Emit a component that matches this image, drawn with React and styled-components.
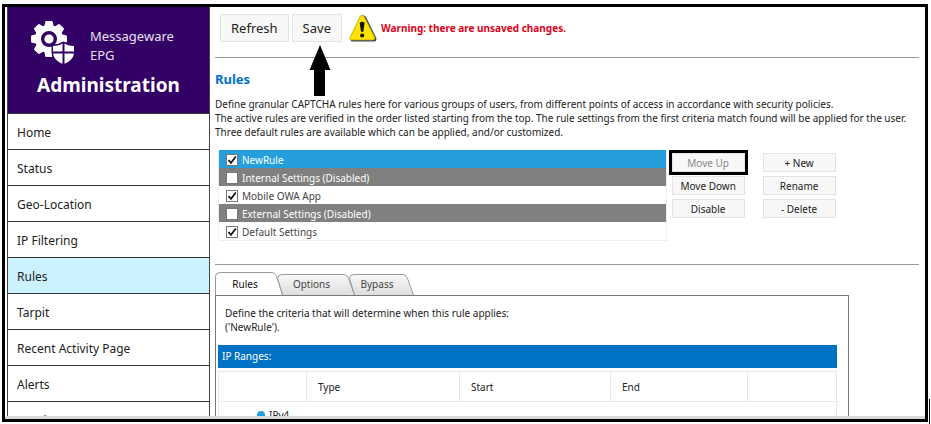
import React, { useState } from 'react';
import styled, { createGlobalStyle } from 'styled-components';

const GlobalStyle = createGlobalStyle`
  * {
    box-sizing: border-box;
  }

  body {
    margin: 0;
    overflow: hidden;
    background: #fff;
    color: #222;
    font-family: 'Noto Sans', 'Open Sans', sans-serif;
    font-size: 10px;
    line-height: 14px;
  }

  button, input {
    font: inherit;
    color: inherit;
    margin: 0;
  }
`;

const Page = styled.div`
  display: flex;
  align-items: flex-end;
  height: 100vh;
  padding: 4px 0 0 2px;
`;

const Frame = styled.div`
  flex: 1;
  min-width: 0;
  height: calc(100vh - 6px);
  margin-bottom: 2px;
  display: flex;
  flex-direction: column;
  border: 3px solid #000;
`;

const Caret = styled.div`
  width: 1px;
  height: 25px;
  margin: 0 1px;
  background: #000;
`;

const Body = styled.div`
  flex: 1;
  min-height: 0;
  display: flex;
  overflow: hidden;
  padding-left: 2px;
  border-bottom: 3px solid #d9d9d9;
`;

const Sidebar = styled.aside`
  flex: none;
  width: 203px;
  border: solid #444;
  border-width: 0 1px;
`;

const Brand = styled.div`
  height: 106px;
  padding-top: 13px;
  background: #330066;
  color: #fff;
`;

const BrandTop = styled.div`
  display: flex;
  gap: 15px;
  padding-left: 22px;
`;

const BrandName = styled.div`
  padding-top: 7px;
  font-size: 13px;
  line-height: 19px;
  color: #e6e0ee;
`;

const BrandTitle = styled.h1`
  margin: 8px 0 0;
  font-size: 19px;
  line-height: 24px;
  text-align: center;
`;

const NavItem = styled.a`
  display: flex;
  align-items: center;
  height: 36px;
  padding: 3px 9px 0;
  border-top: 1px solid #333;
  background: ${(p) => (p.$active ? '#ccf2ff' : '#fff')};
  color: #222;
  font-size: 12px;
  text-decoration: none;
`;

const Main = styled.main`
  flex: 1;
  min-width: 0;
  padding: 7px 6px 0 5px;
`;

const Toolbar = styled.div`
  display: flex;
  align-items: flex-start;
  gap: 3px;
  height: 44px;
  padding-left: 5px;
  border-bottom: 1px solid #999;
`;

const Button = styled.button`
  height: 19px;
  padding: 0;
  border: 1px solid #e3e3e3;
  background: #f8f8f8;
  white-space: nowrap;

  &:disabled {
    color: #888;
  }
`;

const ToolButton = styled(Button)`
  height: 28px;
  padding: 0 10px;
  font-size: 13px;
`;

const SaveSlot = styled.div`
  position: relative;
`;

const Pointer = styled.svg`
  position: absolute;
  top: 31px;
  left: 50%;
  margin-left: -8px;
`;

const Warning = styled.div`
  display: flex;
  align-items: center;
  gap: 4px;
  height: 28px;
  padding-left: 4px;
  color: #e2001a;
  font-size: 10px;
  font-weight: 700;
`;

const Heading = styled.h2`
  margin: 12px 0 9px;
  color: #0072c6;
  font-size: 13px;
  line-height: 18px;
`;

const Text = styled.p`
  margin: 0;
  white-space: nowrap;
`;

const RuleArea = styled.div`
  display: flex;
  padding: 11px 0 23px 3px;
  border-bottom: 1px solid #999;
`;

const RuleList = styled.ul`
  width: 64%;
  height: 91px;
  margin: 0 5px 0 0;
  padding: 0;
  list-style: none;
  border: solid #eee;
  border-width: 0 1px 1px;
`;

const RuleRow = styled.li`
  height: 18px;
  padding-left: 7px;
  background: ${(p) => p.$bg};
  color: ${(p) => p.$color};
`;

const RuleLabel = styled.label`
  display: flex;
  align-items: center;
  gap: 4px;
  height: 18px;
  padding-top: 1px;
`;

const Check = styled.input`
  appearance: none;
  width: 12px;
  height: 12px;
  border: 1px solid #777;
  background: #fff;

  &:checked {
    background: #fff url("data:image/svg+xml,%3Csvg xmlns='http://www.w3.org/2000/svg' viewBox='0 0 10 10'%3E%3Cpath d='M1.5 5 4 7.8 8.8 1.6' fill='none' stroke='%23111' stroke-width='1.7'/%3E%3C/svg%3E");
  }
`;

const Actions = styled.div`
  display: grid;
  grid-template-columns: 73px 73px;
  grid-auto-rows: 19px;
  gap: 4px 18px;
  padding-top: 3px;
`;

const Marked = styled(Button)`
  outline: 3px solid #000;
  z-index: 1;
`;

const Tabs = styled.div`
  display: flex;
  align-items: flex-end;
  margin-top: 7px;
`;

const TabButton = styled.button`
  position: relative;
  z-index: ${(p) => p.$z};
  width: ${(p) => p.$width}px;
  height: 23px;
  margin-right: -7px;
  padding: 0 8px 0 0;
  border: 0;
  background: none;
  color: ${(p) => (p.$active ? '#111' : '#444')};
`;

const TabShape = styled.svg`
  position: absolute;
  inset: 0;
  z-index: -1;
`;

const Panel = styled.section`
  width: 90%;
  height: 200px;
  padding: 10px 11px 0 2px;
  border: 1px solid #777;
`;

const PanelText = styled(Text)`
  padding-left: 7px;
`;

const SectionTitle = styled.h3`
  margin: 11px 0 3px;
  padding-left: 4px;
  background: #0072c6;
  color: #fff;
  font-size: 10px;
  font-weight: 400;
  line-height: 23px;
`;

const Table = styled.table`
  width: 100%;
  table-layout: fixed;
  border-collapse: collapse;

  th, td {
    padding: 0 11px;
    border: 1px solid #e8e8e8;
    font-weight: 400;
    text-align: left;
  }

  th {
    height: 30px;
  }

  td {
    height: 26px;
    padding-left: 38px;
  }
`;

const RadioLabel = styled.label`
  display: flex;
  align-items: center;
  gap: 4px;
`;

const Radio = styled.input`
  appearance: none;
  width: 8px;
  height: 8px;
  border-radius: 50%;
  background: #259fdb;
`;

const navItems = ['Home', 'Status', 'Geo-Location', 'IP Filtering', 'Rules', 'Tarpit', 'Recent Activity Page', 'Alerts', 'Database'];

const initialRules = [
  { name: 'NewRule', enabled: true },
  { name: 'Internal Settings', enabled: false },
  { name: 'Mobile OWA App', enabled: true },
  { name: 'External Settings', enabled: false },
  { name: 'Default Settings', enabled: true },
];

const tabs = [
  { name: 'Rules', width: 68 },
  { name: 'Options', width: 79 },
  { name: 'Bypass', width: 66 },
];

const teeth = [0, 45, 90, 135, 180, 225, 270, 315];

const Logo = () => (
  <svg width="45" height="44" viewBox="0 0 45 44" aria-hidden="true">
    <g fill="#fff">
      <circle cx="19" cy="19" r="14" />
      {teeth.map((a) => (
        <path key={a} d="M14.2 7 15.2 2Q15.4 1 16.4 1H21.6Q22.6 1 22.8 2L23.8 7Z" transform={`rotate(${a} 19 19)`} />
      ))}
    </g>
    <circle cx="19" cy="19" r="6.3" fill="none" stroke="#330066" strokeWidth="3.4" />
    <path
      d="M33.5 23Q38 26 44 26V32C44 38 39.5 42 33.5 44C27.5 42 23 38 23 32V26Q29 26 33.5 23Z"
      fill="#fff"
      stroke="#330066"
      strokeWidth="3"
      strokeLinejoin="round"
      paintOrder="stroke"
    />
    <path d="M33.5 22V44M22 32.5H45" stroke="#330066" strokeWidth="2" />
  </svg>
);

const WarningIcon = () => (
  <svg width="28" height="28" viewBox="0 0 28 28" aria-hidden="true">
    <path d="M14 1.5Q16 1 17 3L27.3 24Q28 27.5 25 27.5H3Q1 27.5 2 25Z" fill="#33425e" />
    <path d="M11.3 2.2Q13 .2 15 2.2L25.8 23.6Q26.5 26 24 26H2.4Q.3 26 1.1 23.6Z" fill="#ffe500" stroke="#b8a100" strokeWidth=".8" />
    <path d="M10.7 8.7Q13.2 6.7 15.6 8.7L14.3 17.7H12Z" fill="#111" />
    <circle cx="13.2" cy="21.5" r="2.1" fill="#111" />
  </svg>
);

const Tab = ({ name, width, active, z, onClick }) => {
  const top = active ? 0.5 : 2.5;
  const left = z === 3 ? 0.5 : 6.5;
  const shoulder = z === 3 ? 0.5 : 1.5;
  const d = `M${left} 23 L${shoulder} ${top + 4} Q${shoulder} ${top} ${shoulder + 4} ${top} H${width - 11} Q${width - 8} ${top} ${width - 6.5} ${top + 4} L${width - 0.5} 23`;

  return (
    <TabButton role="tab" aria-selected={active} $active={active} $z={z} $width={width} onClick={onClick}>
      <TabShape width={width} height="23" aria-hidden="true">
        <defs>
          <linearGradient id={`fill-${name}`} x2="0" y2="1">
            <stop offset="0" stopColor={active ? '#fff' : '#f8f8f8'} />
            <stop offset="1" stopColor={active ? '#fff' : '#dedede'} />
          </linearGradient>
        </defs>
        <path d={d} fill={`url(#fill-${name})`} stroke="#999" />
      </TabShape>
      {name}
    </TabButton>
  );
};

const rowColors = (rule, selected) => {
  if (selected) return { $bg: '#259fdb', $color: '#fff' };
  return rule.enabled ? { $bg: '#fff', $color: '#444' } : { $bg: '#808080', $color: '#fff' };
};

const App = () => {
  const [rules, setRules] = useState(initialRules);
  const [tab, setTab] = useState('Rules');

  const toggleRule = (name) => {
    setRules(rules.map((r) => (r.name === name ? { ...r, enabled: !r.enabled } : r)));
  };

  return (
    <Page>
      <GlobalStyle />
      <Frame>
        <Body>
          <Sidebar>
            <Brand>
              <BrandTop>
                <Logo />
                <BrandName>Messageware<br />EPG</BrandName>
              </BrandTop>
              <BrandTitle>Administration</BrandTitle>
            </Brand>
            <nav>
              {navItems.map((item) => (
                <NavItem key={item} href="#" $active={item === 'Rules'}>{item}</NavItem>
              ))}
            </nav>
          </Sidebar>

          <Main>
            <Toolbar>
              <ToolButton>Refresh</ToolButton>
              <SaveSlot>
                <ToolButton>Save</ToolButton>
                <Pointer width="22" height="52" viewBox="0 0 22 52" aria-hidden="true">
                  <path d="M11 0 21.5 25H16V51H5V25H.5Z" />
                </Pointer>
              </SaveSlot>
              <Warning role="alert">
                <WarningIcon />
                Warning: there are unsaved changes.
              </Warning>
            </Toolbar>

            <Heading>Rules</Heading>
            <Text>Define granular CAPTCHA rules here for various groups of users, from different points of access in accordance with security policies.</Text>
            <Text>The active rules are verified in the order listed starting from the top. The rule settings from the first criteria match found will be applied for the user.</Text>
            <Text>Three default rules are available which can be applied, and/or customized.</Text>

            <RuleArea>
              <RuleList>
                {rules.map((rule, i) => (
                  <RuleRow key={rule.name} {...rowColors(rule, i === 0)}>
                    <RuleLabel>
                      <Check type="checkbox" checked={rule.enabled} onChange={() => toggleRule(rule.name)} />
                      {rule.enabled ? rule.name : `${rule.name} (Disabled)`}
                    </RuleLabel>
                  </RuleRow>
                ))}
              </RuleList>
              <Actions>
                <Marked disabled>Move Up</Marked>
                <Button>+ New</Button>
                <Button>Move Down</Button>
                <Button>Rename</Button>
                <Button>Disable</Button>
                <Button>- Delete</Button>
              </Actions>
            </RuleArea>

            <Tabs role="tablist">
              {tabs.map((t, i) => (
                <Tab key={t.name} {...t} z={3 - i} active={t.name === tab} onClick={() => setTab(t.name)} />
              ))}
            </Tabs>
            <Panel>
              <PanelText>Define the criteria that will determine when this rule applies:</PanelText>
              <PanelText>('NewRule').</PanelText>
              <SectionTitle>IP Ranges:</SectionTitle>
              <Table>
                <colgroup>
                  <col width="88" />
                  <col width="153" />
                  <col width="151" />
                  <col width="137" />
                  <col />
                </colgroup>
                <thead>
                  <tr>
                    <th aria-label="Protocol" />
                    <th>Type</th>
                    <th>Start</th>
                    <th>End</th>
                    <th aria-label="Actions" />
                  </tr>
                </thead>
                <tbody>
                  <tr>
                    <td colSpan="5">
                      <RadioLabel>
                        <Radio type="radio" name="protocol" defaultChecked />
                        IPv4
                      </RadioLabel>
                    </td>
                  </tr>
                </tbody>
              </Table>
            </Panel>
          </Main>
        </Body>
      </Frame>
      <Caret />
    </Page>
  );
};

export default App;
